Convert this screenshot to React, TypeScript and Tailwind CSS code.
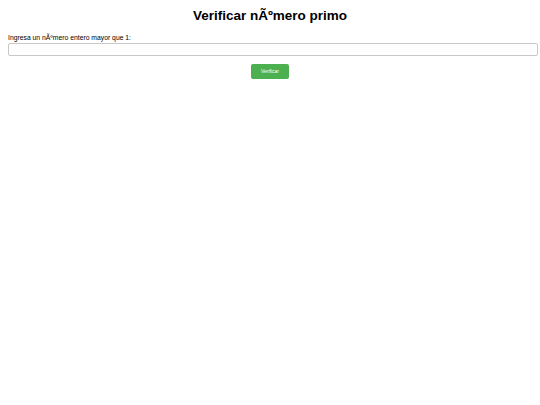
import React from "react";

export default function App() {
    return (
        <div className="w-[540px] h-[405px] bg-white font-['Liberation_Sans',Arial,sans-serif] text-black">
            {/* Title */}
            <h1 className="pt-[7px] text-center text-[13.5px] font-bold leading-[18px]">Verificar nÃºmero primo</h1>

            {/* Form */}
            <div className="px-[8px] pt-[8px]">
                <label className="block text-[6.8px] leading-[9px]">Ingresa un nÃºmero entero mayor que 1:</label>
                <input
                    type="text"
                    className="mt-[1px] block w-[530px] h-[13px] border border-[#c8c8c8] rounded-[2px] bg-white outline-none"
                />
                <div className="flex justify-center pt-[8px] w-[524px]">
                    <button className="w-[38px] h-[15px] rounded-[2px] bg-[#4caf50] text-white text-[5px] leading-none">
                        Verificar
                    </button>
                </div>
            </div>
        </div>
    );
}
